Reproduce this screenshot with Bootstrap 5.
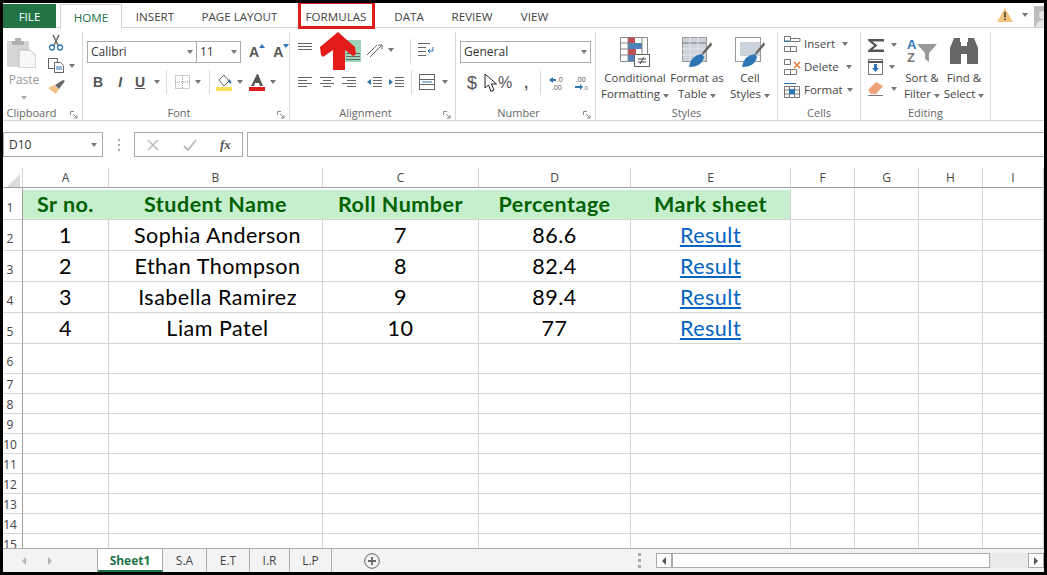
<!DOCTYPE html>
<html lang="en"><head><meta charset="utf-8"><title>Excel</title>
<link href="https://cdn.jsdelivr.net/npm/bootstrap@5.3.0/dist/css/bootstrap.min.css" rel="stylesheet">
<style>
html,body{margin:0;height:575px;overflow:hidden;background:#000}
body{font:12px/16px "Open Sans","Noto Sans",sans-serif;color:#444}
.app{width:1041px;height:569px;margin:3px 3px 0;background:#fff;position:relative;overflow:hidden}
svg{display:block;flex:none}
.car{display:inline-block;flex:none;width:0;height:0;border:3.5px solid transparent;border-top:4px solid #777;border-bottom:0}
.m4{margin-left:4px}.m5{margin-left:5px}.m6{margin-left:6px}.m7{margin-left:7px}.m8{margin-left:8px}.m9{margin-left:9px}.m10{margin-left:10px}.m12{margin-left:12px}.m13{margin-left:13px}.m15{margin-left:15px}.m16{margin-left:16px}.m19{margin-left:19px}
/* tabs */
.tabs{height:25px;border-bottom:1px solid #d4d4d4}
.tabs .nav-link{height:25px;padding:5px 0 0;text-align:center;color:#444;font-size:11.6px;line-height:18px;border-radius:0}
.t-file{width:53px;margin-top:1px;background:#217346;color:#fff!important;margin-right:4px;height:24px!important;padding-top:4px!important}
.t-home{width:62px;background:#fff;border:1px solid #d4d4d4;border-bottom:0;color:#217346!important;margin-top:1px;height:25px!important;padding-top:4px!important}
.t-ins{width:66px}.t-pl{width:103px}.t-for{width:90px}.t-dat{width:56px}.t-rev{width:70px}.t-vw{width:55px}
.redbox{position:absolute;left:295px;top:-2px;width:77px;height:28px;border:3px solid #e01b1b}
.arrow{position:absolute;left:316px;top:28px}
/* ribbon */
.ribbon{height:93px;border-bottom:1px solid #d4d4d4}
.grp{position:relative;height:88px;margin-top:4px;border-right:1px solid #d9d9d9;flex:none;display:flex;flex-direction:column}
.lbl{height:14px;font-size:11px;line-height:14px;text-align:center;color:#666;margin-top:auto}
.g1 .lbl{padding-right:22px}.g2 .lbl,.g3 .lbl,.g4 .lbl{padding-right:14px}
.launch{position:absolute;right:4px;bottom:1px;width:8px;height:8px}
.body{flex:1;min-height:0}
.g1{width:80px}.g2{width:207px}.g3{width:166px}.g4{width:140px}.g5{width:182px}.g6{width:83px}.g7{width:130px}
.sel{height:22px;border:1px solid #ababab;background:#fff;color:#333;font-size:12px;line-height:20px;padding:0 3px;display:flex;align-items:center;justify-content:space-between;flex:none}
.rowa{display:flex;align-items:center}
.vsep{width:1px;height:24px;background:#d9d9d9;flex:none}
.big{font-size:11.5px;line-height:16px;text-align:center;color:#444;white-space:nowrap}
.sbtn{display:flex;flex-direction:column;align-items:center;flex:none}
.glyph{font-family:"Liberation Sans",sans-serif;font-weight:700;color:#555;font-size:14px;line-height:16px}
.dollar{font-size:18px!important;font-weight:400}
.pct{font-size:16px!important;font-weight:400}
.paste{width:34px;margin:5px 0 0 4px;color:#9a9a9a;text-align:center}
.paste .car{border-top-color:#aaa;margin-top:6px}
.paste span.tx{display:block;margin-top:4px;font-size:12px}
.clip2{margin-left:7px;padding-top:3px;display:flex;flex-direction:column;gap:7px}
.g2 .r1{padding:9px 0 0 4px}.g2 .r2{padding:7px 0 0 10px}
.fn{width:110px}.sz{width:44px;border-left:0}
.g3 .r1{padding:6px 0 0 8px;height:32px}.g3 .r2{padding:6px 0 0 8px}
.up8{margin-bottom:8px}.up3{margin-bottom:3px}
.g4 .r1{padding:9px 0 0 4px}.g4 .r2{padding:8px 0 0 11px}
.numsel{width:131px}
.g5 .body{display:flex;padding:5px 0 0 5px}
.g5 .sbtn svg{margin-bottom:3px}
.c-cf{width:68px}.c-ft{width:56px}.c-cs{width:50px}
.g6 .body{padding:4px 0 0 6px;display:flex;flex-direction:column;gap:7px;font-size:11.5px}
.g6 .rowa{height:16px}.g6 .rowa span.t{margin-left:3px}
.mr12{margin-right:12px}.mr8{margin-right:8px}
.g7 .body{display:flex;padding:6px 0 0 7px}
.ed1{display:flex;flex-direction:column;gap:6px;width:34px;margin-top:-1px}
.ed1 .rowa{height:16px;gap:6px}
.c-so{width:40px}.c-fi{width:44px}
.g7 .sbtn svg{margin-bottom:5px;overflow:visible}
/* formula */
.fbar{height:25px;margin-top:11px}
.namebox{width:100px;height:25px;border:1px solid #ababab;padding:0 5px;display:flex;align-items:center;justify-content:space-between;color:#333;line-height:16px;flex:none}
.dots{width:31px;flex:none;display:flex;flex-direction:column;align-items:center;gap:3px}
.dots i{width:2px;height:2px;background:#aaa;display:block}
.fxbox{width:109px;height:25px;border:1px solid #ababab;display:flex;align-items:center;flex:none;padding-left:12px;gap:20px}
.fxbox em{font:italic 700 13px "Liberation Serif",serif;color:#555;margin-left:3px}
.finput{flex:1;height:25px;margin-left:4px;border:1px solid #ababab;border-right:0}
/* sheet */
.sheetwrap{height:380px;margin-top:11px;overflow:hidden;position:relative}
table.sheet{table-layout:fixed;border-collapse:separate;border-spacing:0;width:1041px}
.sheet th,.sheet td{padding:0;border-right:1px solid #d4d4d4;border-bottom:1px solid #d4d4d4;overflow:hidden;white-space:nowrap}
.sheet thead th{height:20px;font-weight:400;font-size:12px;text-align:center;color:#444;border-bottom:1px solid #9f9f9f;background:#fff;vertical-align:middle}
.sheet th.rh{font-weight:400;font-size:12px;color:#444;text-align:center;padding:0 5px 0 0;vertical-align:bottom;line-height:17px;border-right:1px solid #9f9f9f}
.sheet tr.t th.rh{padding-bottom:3px}
.sheet th.corner{border-right:1px solid #d4d4d4}
.tri{display:block;width:0;height:0;margin:5px 0 0 4px;border-style:solid;border-width:0 0 13px 13px;border-color:transparent transparent #dcdcdc transparent}
.cell{font:21.5px/30px Lato,"Open Sans",sans-serif;letter-spacing:.5px;text-align:center;color:#000;vertical-align:bottom}
.sheet tr:not(.hd) td.nm{padding-left:4px}
tr.hd .cell{line-height:29px;background:#c6efce;color:#006100;font-weight:700;border-color:#c6efce;border-top:2px solid #fff;border-bottom-color:#d4d4d4}
tr.hd .cell.last{border-right-color:#d4d4d4}
.cell a{color:#0563c1;text-decoration:underline}
/* sheet tabs */
.sbar{height:24px;background:#f3f3f3;border-top:1px solid #ababab;position:relative;color:#444}
.nav-arrows{width:95px;height:23px;padding-left:19px;gap:22px;flex:none;border-right:1px solid #ababab}
.nav-arrows .tleft{border-right-color:#b5b5b5}.nav-arrows .tright{border-left-color:#b5b5b5}
.stab{height:23px;line-height:24px;text-align:center;border-right:1px solid #ababab;font-size:12px;flex:none}
.stab.on{width:65px;background:#fff;color:#217346;font-weight:700;border-bottom:2px solid #217346}
.s1{width:44px}.s2{width:43px}.s3{width:40px}.s4{width:42px}
.plus{margin-left:32px;align-self:center}
.sdots{margin-left:auto;margin-right:15px;display:flex;flex-direction:column;gap:3px}
.sdots i{width:3px;height:3px;background:#aaa;display:block}
.hscroll{width:388px;height:15px;background:#eaeaea;flex:none;align-self:center;display:flex}
.sbb{width:16px;height:15px;background:#fff;border:1px solid #ababab;display:flex;align-items:center;justify-content:center;flex:none}
.thumb{width:318px;height:15px;background:#fff;border:1px solid #ababab;flex:none}
.tleft{width:0;height:0;border:4px solid transparent;border-right:4px solid #555;border-left:0}
.tright{width:0;height:0;border:4px solid transparent;border-left:4px solid #555;border-right:0}
.sright{margin-left:auto}
.warn{margin-left:auto;margin-right:9px;align-self:center}
.ava{margin-left:6px;align-self:flex-end}
</style></head><body>
<div class="app">
  <div class="tabs d-flex">
    <a class="nav-link t-file">FILE</a><a class="nav-link t-home">HOME</a><a class="nav-link t-ins">INSERT</a><a class="nav-link t-pl">PAGE LAYOUT</a><a class="nav-link t-for">FORMULAS</a><a class="nav-link t-dat">DATA</a><a class="nav-link t-rev">REVIEW</a><a class="nav-link t-vw">VIEW</a>
    <svg class="warn" width="16" height="14" viewBox="0 0 16 14"><path d="M8 0 16 14H0Z" fill="#f0c27a"/><rect x="7.200" y="4" width="1.600" height="5.500" fill="#444"/><rect x="7.200" y="10.500" width="1.600" height="1.600" fill="#444"/></svg>
    <span class="car align-self-center"></span>
    <svg class="ava" width="10" height="21" viewBox="0 0 10 21"><rect width="10" height="21" fill="#bdbdbd"/><circle cx="9" cy="9" r="4" fill="#e8e8e8"/><path d="M2 21Q3 14 9 14h1v7Z" fill="#e8e8e8"/></svg>
  </div>
  <div class="ribbon d-flex">
    <div class="grp g1">
      <div class="body d-flex">
        <div class="paste">
          <svg width="29" height="31" viewBox="0 0 29 31"><rect x="0" y="4" width="22" height="26" fill="#d6d6d6"/><path d="M5 4h3V1h6v3h3v4H5Z" fill="#b0b0b0"/><path d="M12 13h11l6 6v12H12Z" fill="#f7f7f7" stroke="#bcbcbc"/></svg>
          <span class="tx">Paste</span><span class="car"></span>
        </div>
        <div class="clip2">
          <svg width="16" height="16" viewBox="0 0 16 16" fill="none"><path d="M5 0 10 10M11 0 6 10" stroke="#666" stroke-width="1.400"/><circle cx="4" cy="12.500" r="2.500" stroke="#2e75b6" stroke-width="1.300"/><circle cx="12" cy="12.500" r="2.500" stroke="#2e75b6" stroke-width="1.300"/></svg>
          <div class="rowa gap-1"><svg width="17" height="15" viewBox="0 0 17 15" fill="#fff" stroke="#666"><rect x=".5" y=".5" width="9" height="10"/><path d="M6.500 4.500h6l3 3v7h-9Z"/><path d="M8 9h6M8 11h6" stroke="#2e75b6"/></svg><span class="car"></span></div>
          <svg width="17" height="15" viewBox="0 0 17 15"><path d="M0 8 8 14l3-5-5-4Z" fill="#f2c184"/><path d="M7 5l4 4 6-8-2-1Z" fill="#666"/></svg>
        </div>
      </div>
      <div class="lbl">Clipboard<svg class="launch" viewBox="0 0 8 8" fill="none" stroke="#888"><path d="M.5 4V.5H4M3 3l4 4M7 4v3H4"/></svg></div>
    </div>
    <div class="grp g2">
      <div class="body">
        <div class="rowa r1"><div class="sel fn"><span>Calibri</span><span class="car"></span></div><div class="sel sz"><span>11</span><span class="car"></span></div>
          <span class="glyph ms-2 d-flex align-items-start">A<svg width="6" height="4" viewBox="0 0 6 4"><path d="M3 0 6 4H0Z" fill="#2e75b6"/></svg></span><span class="glyph ms-2 d-flex align-items-start small">A<svg width="6" height="4" viewBox="0 0 6 4"><path d="M0 0H6L3 4Z" fill="#2e75b6"/></svg></span></div>
        <div class="rowa r2"><span class="glyph">B</span><span class="glyph fst-italic m15">I</span><span class="glyph text-decoration-underline m13">U</span><span class="car m9"></span><span class="vsep m6"></span>
          <svg class="m8" width="15" height="14" viewBox="0 0 15 14" fill="none" stroke="#999" stroke-dasharray="1 1"><rect x=".5" y=".5" width="14" height="13"/><path d="M7.500 0v14M0 7h15"/></svg><span class="car m5"></span><span class="vsep m8"></span>
          <svg class="m6" width="16" height="17" viewBox="0 0 16 17"><path d="M3 6 8 1l5 6-5 5Z" fill="#fff" stroke="#666"/><path d="M13 5q3 2 2 5-3-1-2-5Z" fill="#2e75b6"/><rect y="13" width="16" height="4" fill="#f7e15c"/></svg><span class="car m5"></span>
          <svg class="m6" width="16" height="17" viewBox="0 0 16 17"><path d="M8 0h1l5 12h-3l-1-3H6l-1 3H2Z" fill="#555"/><rect y="13" width="16" height="4" fill="#e01b1b"/></svg><span class="car m5"></span></div>
      </div>
      <div class="lbl">Font<svg class="launch" viewBox="0 0 8 8" fill="none" stroke="#888"><path d="M.5 4V.5H4M3 3l4 4M7 4v3H4"/></svg></div>
    </div>
    <div class="grp g3">
      <div class="body">
        <div class="rowa r1">
          <svg class="up8" width="14" height="8" viewBox="0 0 14 8" stroke="#666"><path d="M0 .5h14M0 3.500h14M0 6.500h14"/></svg>
          <svg class="m19" width="30" height="22" viewBox="0 0 30 22"><rect x="14" y="0" width="16" height="22" fill="#9fd5b7"/><path d="M15 13.500h14M15 16.500h14M15 19.500h14" stroke="#666"/></svg>
          <svg class="m5 up3" width="18" height="16" viewBox="0 0 18 16" fill="none" stroke="#666"><path d="M1 13 11 3M4 15 16 3M16 3v4M16 3h-4"/></svg><span class="car m4 up3"></span>
          <span class="vsep m16"></span>
          <svg class="m7 up3" width="16" height="15" viewBox="0 0 16 15" fill="none" stroke="#666"><path d="M0 1.500h12M0 5.500h8M0 9.500h8M0 13.500h8"/><path d="M10 9h5V5M10 9l2-2M10 9l2 2" stroke="#2e75b6"/></svg>
        </div>
        <div class="rowa r2">
          <svg width="14" height="11" viewBox="0 0 14 11" stroke="#666"><path d="M0 .5h14M0 3.500h9M0 6.500h14M0 9.500h9"/></svg>
          <svg class="m8" width="14" height="11" viewBox="0 0 14 11" stroke="#666"><path d="M0 .5h14M3 3.500h8M0 6.500h14M3 9.500h8"/></svg>
          <svg class="m8" width="14" height="11" viewBox="0 0 14 11" stroke="#666"><path d="M0 .5h14M5 3.500h9M0 6.500h14M5 9.500h9"/></svg>
          <svg class="m10" width="16" height="11" viewBox="0 0 16 11" fill="none"><path d="M7 .5h9M7 3.500h9M7 6.500h9M7 9.500h9" stroke="#666"/><path d="M5 2 1 5l4 3Z" fill="#2e75b6"/></svg>
          <svg class="m6" width="16" height="11" viewBox="0 0 16 11" fill="none"><path d="M7 .5h9M7 3.500h9M7 6.500h9M7 9.500h9" stroke="#666"/><path d="M1 2 5 5 1 8Z" fill="#2e75b6"/></svg>
          <span class="vsep m7"></span>
          <svg class="m7" width="16" height="16" viewBox="0 0 16 16" fill="none" stroke="#666"><rect x=".5" y=".5" width="15" height="15"/><path d="M0 5.500h16M0 10.500h16"/><path d="M3 8h10" stroke="#2e75b6"/></svg><span class="car m7"></span>
        </div>
      </div>
      <div class="lbl">Alignment<svg class="launch" viewBox="0 0 8 8" fill="none" stroke="#888"><path d="M.5 4V.5H4M3 3l4 4M7 4v3H4"/></svg></div>
    </div>
    <div class="grp g4">
      <div class="body">
        <div class="rowa r1"><div class="sel numsel"><span>General</span><span class="car"></span></div></div>
        <div class="rowa r2">
          <span class="glyph dollar">$</span>
          <svg class="m7" width="14" height="20" viewBox="0 0 14 20"><path d="M1 1V15L4.500 12 7 18.500 10 17 7.500 11H12.500Z" fill="#fff" stroke="#222"/></svg>
          <span class="glyph pct">%</span><span class="glyph m12">,</span><span class="vsep m12"></span>
          <svg class="m8" width="16" height="15" viewBox="0 0 16 15"><path d="M0 4 4 1v2h3v2H4v2Z" fill="#2e75b6"/><text x="8" y="6" font-size="7" fill="#555">.0</text><text x="3" y="14" font-size="7" fill="#555">.00</text></svg>
          <svg class="m8" width="16" height="15" viewBox="0 0 16 15"><text x="3" y="6" font-size="7" fill="#555">.00</text><path d="M7 12h-5v-2h5V8l3 3-3 3Z" fill="#2e75b6"/><text x="10" y="14" font-size="6" fill="#555">.0</text></svg>
        </div>
      </div>
      <div class="lbl">Number<svg class="launch" viewBox="0 0 8 8" fill="none" stroke="#888"><path d="M.5 4V.5H4M3 3l4 4M7 4v3H4"/></svg></div>
    </div>
    <div class="grp g5">
      <div class="body">
        <div class="sbtn c-cf"><svg width="30" height="30" viewBox="0 0 30 30" fill="none"><path d="M.5.500h27v24H.5Z" stroke="#888"/><path d="M8 .500h7v6H8ZM8 12h8v6H8Z" fill="#c0504d"/><path d="M8 6h14v6H8Z" fill="#4f81bd"/><path d="M8 18h6v6H8Z" fill="#4f81bd"/><path d="M0 6h8M0 12h8M0 18h8M8 0v24M22 0v18" stroke="#888"/><rect x="14.500" y="17.500" width="15" height="12" fill="#fff" stroke="#666"/><path d="M18 22h8M18 25h8M24 20l-4 7" stroke="#444"/></svg><div class="big">Conditional<br>Formatting <span class="car"></span></div></div>
        <div class="sbtn c-ft"><svg width="30" height="30" viewBox="0 0 30 30"><rect x=".5" y=".5" width="24" height="24" fill="#cdd3da" stroke="#999"/><path d="M0 6h24" stroke="#777"/><path d="M0 12h24M0 18h24M8 0v24M16 0v24" stroke="#e4e6e9"/><path d="M20 16 29 5l1 3-9 10Z" fill="#666"/><path d="M7 30q2-12 13-13l2 3q-2 10-15 10Z" fill="#2e75b6"/></svg><div class="big">Format as<br>Table <span class="car"></span></div></div>
        <div class="sbtn c-cs"><svg width="30" height="30" viewBox="0 0 30 30"><rect x=".5" y=".5" width="25" height="24" fill="#fff" stroke="#999"/><rect x="5" y="5" width="20" height="14" fill="#cdd3da"/><path d="M20 16 29 5l1 3-9 10Z" fill="#666"/><path d="M7 30q2-12 13-13l2 3q-2 10-15 10Z" fill="#2e75b6"/></svg><div class="big">Cell<br>Styles <span class="car"></span></div></div>
      </div>
      <div class="lbl">Styles</div>
    </div>
    <div class="grp g6">
      <div class="body">
        <div class="rowa"><svg width="17" height="16" viewBox="0 0 17 16" fill="none" stroke="#777"><path d="M.5.500h6v5h-6ZM.5 10.500h12v5H.5ZM6.500 10.500v5M7 5.500h9v-3H7"/><path d="M0 5h6" stroke="#2e75b6"/></svg><span class="t">Insert</span><span class="car ms-auto mr12"></span></div>
        <div class="rowa"><svg width="17" height="16" viewBox="0 0 17 16" fill="none" stroke="#777"><path d="M.5.500h6v5h-6ZM.5 10.500h12v5H.5ZM6.500 10.500v5"/><path d="M10 3l6 6M16 3l-6 6" stroke="#e07b39" stroke-width="1.500"/></svg><span class="t">Delete</span><span class="car ms-auto mr8"></span></div>
        <div class="rowa"><svg width="17" height="16" viewBox="0 0 17 16" fill="none" stroke="#777"><path d="M.5 4.500h15v11H.5ZM0 8h16M0 12h16M5.500 4v12M10.500 4v12"/><path d="M0 1.500h12" stroke="#2e75b6"/><rect x="5" y="7" width="6" height="5" fill="#2e75b6" stroke="none"/></svg><span class="t">Format</span><span class="car ms-1"></span></div>
      </div>
      <div class="lbl">Cells</div>
    </div>
    <div class="grp g7">
      <div class="body">
        <div class="ed1">
          <div class="rowa"><svg width="17" height="13" viewBox="0 0 17 13"><path d="M0 0H16V2.500H4.500L9.500 6.500 4.500 10.500H16V13H0V11.500L6 6.500 0 1.500Z" fill="#555"/></svg><span class="car"></span></div>
          <div class="rowa"><svg width="15" height="16" viewBox="0 0 15 16"><rect x=".5" y=".5" width="14" height="15" fill="#fff" stroke="#777"/><path d="M0 3h15" stroke="#555" stroke-width="2"/><path d="M6 5h3v4h2l-3.500 4L4 9h2Z" fill="#2e75b6"/></svg><span class="car"></span></div>
          <div class="rowa"><svg width="17" height="14" viewBox="0 0 17 14"><path d="M0 8 8 0l7 4-7 8H3Z" fill="#efa27a"/><path d="M0 13.500h15" stroke="#777"/></svg><span class="car"></span></div>
        </div>
        <div class="sbtn c-so"><svg width="30" height="27" viewBox="0 0 30 27"><text x="0" y="11" font-size="13" font-weight="700" font-family="Liberation Sans" fill="#2e75b6">A</text><text x="0" y="24" font-size="13" font-weight="700" font-family="Liberation Sans" fill="#777">Z</text><path d="M10 6H30L22 15V24L18 21V15Z" fill="#999"/></svg><div class="big">Sort &amp;<br>Filter <span class="car"></span></div></div>
        <div class="sbtn c-fi"><svg width="28" height="27" viewBox="0 0 28 27" fill="#666"><path d="M4 0h6v4h1v22H0V10ZM18 0h6l4 10v16H17V4h1Z"/><rect x="11" y="8" width="6" height="8"/></svg><div class="big">Find &amp;<br>Select <span class="car"></span></div></div>
      </div>
      <div class="lbl">Editing</div>
    </div>
  </div>
  <div class="fbar d-flex">
    <div class="namebox"><span>D10</span><span class="car"></span></div>
    <div class="dots align-self-center"><i></i><i></i><i></i></div>
    <div class="fxbox"><svg width="12" height="12" viewBox="0 0 12 12" stroke="#bbb" stroke-width="1.500"><path d="M1 1 11 11M11 1 1 11"/></svg><svg class="ms-1" width="14" height="12" viewBox="0 0 14 12" fill="none" stroke="#bbb" stroke-width="2"><path d="M1 7 5 11 13 1"/></svg><em>fx</em></div>
    <div class="finput"></div>
  </div>
  <div class="sheetwrap">
    <table class="sheet">
      <colgroup><col style="width:20px"><col style="width:86px"><col style="width:214px"><col style="width:156px"><col style="width:152px"><col style="width:160px"><col style="width:64px"><col style="width:64px"><col style="width:64px"><col style="width:61px"></colgroup>
      <thead><tr><th class="corner"><span class="tri"></span></th><th>A</th><th>B</th><th>C</th><th>D</th><th>E</th><th>F</th><th>G</th><th>H</th><th>I</th></tr></thead>
      <tbody>
        <tr class="hd t" style="height:31px"><th class="rh">1</th><td class="cell">Sr no.</td><td class="cell">Student Name</td><td class="cell">Roll Number</td><td class="cell">Percentage</td><td class="cell last">Mark sheet</td><td></td><td></td><td></td><td></td></tr>
        <tr class="t" style="height:31px"><th class="rh">2</th><td class="cell">1</td><td class="cell nm">Sophia Anderson</td><td class="cell">7</td><td class="cell">86.6</td><td class="cell"><a href="#">Result</a></td><td></td><td></td><td></td><td></td></tr>
        <tr class="t" style="height:31px"><th class="rh">3</th><td class="cell">2</td><td class="cell nm">Ethan Thompson</td><td class="cell">8</td><td class="cell">82.4</td><td class="cell"><a href="#">Result</a></td><td></td><td></td><td></td><td></td></tr>
        <tr class="t" style="height:31px"><th class="rh">4</th><td class="cell">3</td><td class="cell nm">Isabella Ramirez</td><td class="cell">9</td><td class="cell">89.4</td><td class="cell"><a href="#">Result</a></td><td></td><td></td><td></td><td></td></tr>
        <tr class="t" style="height:31px"><th class="rh">5</th><td class="cell">4</td><td class="cell nm">Liam Patel</td><td class="cell">10</td><td class="cell">77</td><td class="cell"><a href="#">Result</a></td><td></td><td></td><td></td><td></td></tr>
        <tr class="t" style="height:30px"><th class="rh">6</th><td></td><td></td><td></td><td></td><td></td><td></td><td></td><td></td><td></td></tr>
        <tr style="height:20px"><th class="rh">7</th><td></td><td></td><td></td><td></td><td></td><td></td><td></td><td></td><td></td></tr>
        <tr style="height:20px"><th class="rh">8</th><td></td><td></td><td></td><td></td><td></td><td></td><td></td><td></td><td></td></tr>
        <tr style="height:20px"><th class="rh">9</th><td></td><td></td><td></td><td></td><td></td><td></td><td></td><td></td><td></td></tr>
        <tr style="height:20px"><th class="rh">10</th><td></td><td></td><td></td><td></td><td></td><td></td><td></td><td></td><td></td></tr>
        <tr style="height:20px"><th class="rh">11</th><td></td><td></td><td></td><td></td><td></td><td></td><td></td><td></td><td></td></tr>
        <tr style="height:20px"><th class="rh">12</th><td></td><td></td><td></td><td></td><td></td><td></td><td></td><td></td><td></td></tr>
        <tr style="height:20px"><th class="rh">13</th><td></td><td></td><td></td><td></td><td></td><td></td><td></td><td></td><td></td></tr>
        <tr style="height:20px"><th class="rh">14</th><td></td><td></td><td></td><td></td><td></td><td></td><td></td><td></td><td></td></tr>
        <tr style="height:20px"><th class="rh">15</th><td></td><td></td><td></td><td></td><td></td><td></td><td></td><td></td><td></td></tr>
      </tbody>
    </table>
  </div>
  <div class="sbar d-flex">
    <div class="nav-arrows d-flex align-items-center"><span class="tleft"></span><span class="tright"></span></div>
    <div class="stab on">Sheet1</div><div class="stab s1">S.A</div><div class="stab s2">E.T</div><div class="stab s3">I.R</div><div class="stab s4">L.P</div>
    <svg class="plus" width="16" height="16" viewBox="0 0 16 16" fill="none" stroke="#666"><circle cx="8" cy="8" r="7.300"/><path d="M8 4v8M4 8h8" stroke-width="1.800"/></svg>
    <div class="sdots align-self-center"><i></i><i></i><i></i></div>
    <div class="hscroll"><span class="sbb"><span class="tleft"></span></span><span class="thumb"></span><span class="sbb sright"><span class="tright"></span></span></div>
  </div>
  <div class="redbox"></div>
  <svg class="arrow" width="40" height="40" viewBox="0 0 40 40"><path d="M19 1 36 16 37 23 34 25 26 19V39H14V19L4 26 2 24 1 16Z" fill="#e31b1b"/></svg>
</div>
<script src="https://cdn.jsdelivr.net/npm/bootstrap@5.3.0/dist/js/bootstrap.bundle.min.js"></script>
</body></html>
